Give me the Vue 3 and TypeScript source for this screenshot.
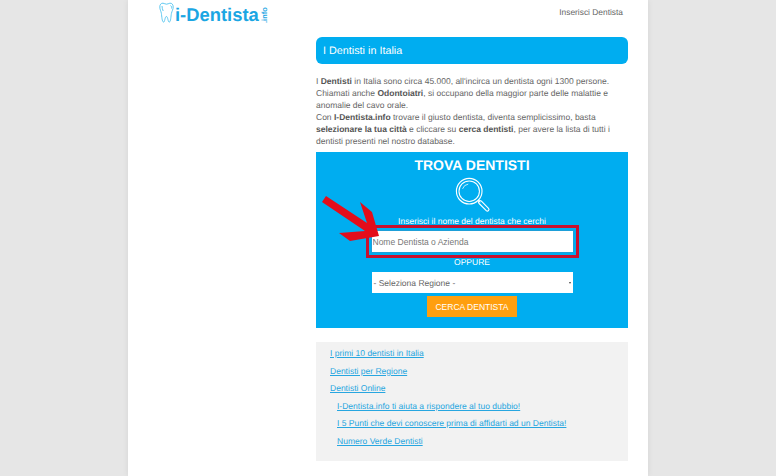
<script setup lang="ts">
const links = [
  { t: 'I primi 10 dentisti in Italia', sub: false },
  { t: 'Dentisti per Regione', sub: false },
  { t: 'Dentisti Online', sub: false },
  { t: 'I-Dentista.info ti aiuta a rispondere al tuo dubbio!', sub: true },
  { t: 'I 5 Punti che devi conoscere prima di affidarti ad un Dentista!', sub: true },
  { t: 'Numero Verde Dentisti', sub: true },
]
</script>

<template>
  <div class="page">
    <div class="sheet">
      <header class="top">
        <div class="logo">
          <svg class="tooth" width="15" height="22" viewBox="0 0 15 22" fill="none" stroke="#4fc3ee" stroke-width="0.9">
            <path d="M4 1.2C2 1 .8 2.6.8 5c0 2.600 1.200 4 1.600 6.500.4 2.800.6 8 2 8.600 1.500.5 1.400-5.600 3-5.600s1.500 6 3 5.600c1.400-.6 1.500-5.800 2-8.600.5-2.500 1.800-3.900 1.800-6.500 0-2.400-1.300-4-3.300-3.800C9.500 1.400 8.800 2.200 7.500 2.200S5.500 1.300 4 1.200z" />
            <path d="M3 4c0 2 .6 3.500 1.200 5M11.500 3.500c1 .6 1.300 1.800 1 3" />
          </svg>
          <span class="brand">i-Dentista</span>
          <span class="tld">.info</span>
        </div>
        <a class="nav">Inserisci Dentista</a>
      </header>
      <main class="layout">
        <div class="side"></div>
        <div class="content">
          <h1 class="title">I Dentisti in Italia</h1>
          <p class="intro">
            I <b>Dentisti</b> in Italia sono circa 45.000, all'incirca un dentista ogni 1300 persone.
            Chiamati anche <b>Odontoiatri</b>, si occupano della maggior parte delle malattie e
            anomalie del cavo orale.<br />
            Con <b>I-Dentista.info</b> trovare il giusto dentista, diventa semplicissimo, basta
            <b>selezionare la tua città</b> e cliccare su <b>cerca dentisti</b>, per avere la lista di tutti i
            dentisti presenti nel nostro database.
          </p>
          <section class="finder">
            <h2 class="ftitle">TROVA DENTISTI</h2>
            <svg class="lens" width="36" height="36" viewBox="0 0 38 38" fill="none" stroke="#fff">
              <circle cx="15" cy="15" r="13.500" stroke-width="1.200" />
              <circle cx="15" cy="15" r="10.800" stroke-width="1.100" />
              <path d="M8 12.500A7.500 7.500 0 0 1 14 7.500" stroke-width="0.800" />
              <path d="M24.500 24.500l2.200 2.200" stroke-width="1.200" />
              <path d="M27.600 25.300l7.800 7.800a1.700 1.700 0 0 1-2.400 2.400l-7.800-7.800a1.700 1.700 0 0 1 2.400-2.400z" stroke-width="1.200" />
            </svg>
            <div class="label first">Inserisci il nome del dentista che cerchi</div>
            <div class="inputwrap">
              <input class="field" placeholder="Nome Dentista o Azienda" />
              <svg class="arrow" width="62" height="50" viewBox="320 195 62 50">
                <path d="M322 203L326 197L367 224L360 203L372 213L379 237L350 242L339 234L365 232Z" fill="#e30d1b" />
              </svg>
            </div>
            <div class="label oppure">OPPURE</div>
            <div class="select">
              <span>- Seleziona Regione -</span>
              <i class="caret"></i>
            </div>
            <button class="cta">CERCA DENTISTA</button>
          </section>
          <nav class="links">
            <a v-for="l in links" :key="l.t" class="link" :class="{ sub: l.sub }">{{ l.t }}</a>
          </nav>
        </div>
      </main>
    </div>
  </div>
</template>

<style>
html, body { margin: 0; background: #e6e6e6; }
</style>

<style scoped>
.page { width: 776px; height: 476px; overflow: hidden; background: #e6e6e6; font-family: "Liberation Sans", Arial, sans-serif; text-rendering: geometricPrecision; }
.sheet { width: 520px; height: 476px; margin-left: 128px; background: #fff; box-sizing: border-box; padding: 0 20px 0 31px; box-shadow: 0 0 6px rgba(0, 0, 0, 0.08); }
.top { height: 37px; display: flex; justify-content: space-between; align-items: flex-start; }
.logo { display: flex; align-items: flex-start; position: relative; }
.tooth { margin-top: 2px; }
.brand { color: #1ba6e3; font-weight: 700; font-size: 18.400px; line-height: 22px; margin-left: 1px; margin-top: 3.500px; }
.tld { color: #1ba6e3; font-weight: 700; font-size: 7.500px; writing-mode: vertical-rl; transform: rotate(180deg); line-height: 7px; margin-top: 5px; height: 18px; margin-left: 2px; text-align: left; }
.nav { color: #666; font-size: 8.400px; margin-top: 6px; line-height: 12px; margin-right: 5px; }
.layout { display: flex; }
.side { width: 157px; flex: none; }
.content { width: 312px; flex: none; }
.title { margin: 0; height: 27px; line-height: 28px; padding-left: 7px; background: #00adf0; border-radius: 6px; color: #fff; font-size: 10.800px; font-weight: 400; }
.intro { margin: 12px 0 0; color: #666; font-size: 8.500px; line-height: 11.900px; height: 76px; }
.intro b { color: #555; }
.finder { height: 176px; background: #00adf0; display: flex; flex-direction: column; align-items: center; color: #fff; }
.ftitle { margin: 5px 0 0; font-size: 14px; line-height: 17px; font-weight: 700; }
.lens { margin-top: 3px; margin-left: 1px; }
.label { font-size: 8.500px; line-height: 11px; }
.first { margin-top: 3px; }
.inputwrap { position: relative; margin-top: -2px; border: 3px solid #c8102e; padding: 3px; line-height: 0; }
.field { display: block; width: 201px; height: 21px; box-sizing: border-box; border: 0; padding: 0 2px 0 1px; background: #fff; font: 8.500px "Liberation Sans", Arial, sans-serif; color: #666; outline: 1px solid #1e9fd8; }
.field::placeholder { color: #777; opacity: 1; }
.arrow { position: absolute; left: -49px; top: -34px; }
.oppure { margin-top: -1px; }
.select { width: 201px; height: 21px; margin-top: 4px; background: #fff; color: #666; font-size: 8.500px; display: flex; align-items: center; justify-content: space-between; padding: 0 2px; box-sizing: border-box; }
.caret { width: 0; height: 0; border: 1.500px solid transparent; border-top: 2.500px solid #444; border-bottom: 0; }
.cta { width: 90px; height: 21px; margin-top: 3px; border: 0; padding: 0; background: #ff9f0f; color: #fff; font: 8.500px "Liberation Sans", Arial, sans-serif; }
.links { margin-top: 14px; height: 119px; background: #f2f2f2; padding: 3px 14px 0; box-sizing: border-box; display: flex; flex-direction: column; }
.link { color: #27a6e0; text-decoration: underline; font-size: 8.530px; line-height: 17.500px; }
.sub { padding-left: 7px; }
</style>
